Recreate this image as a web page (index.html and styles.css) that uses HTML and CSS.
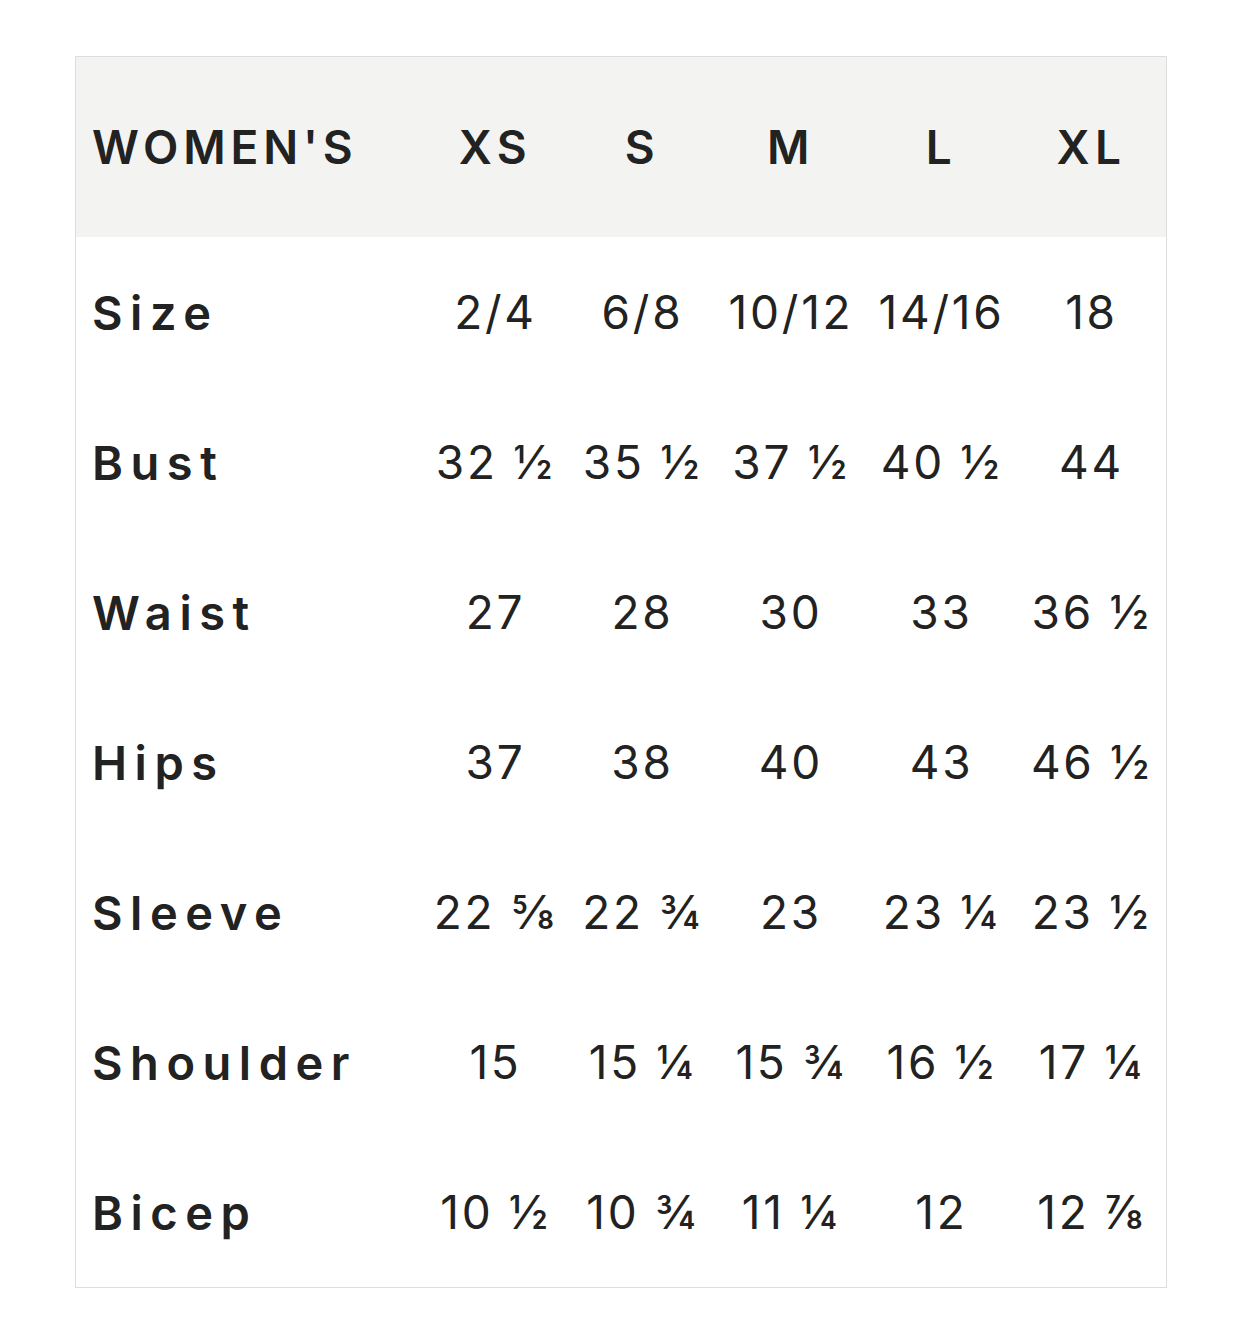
FILE: index.html
```html
<!DOCTYPE html>
<html>
<head>
<meta charset="utf-8">
<link rel="stylesheet" href="styles.css">
</head>
<body>
<div class="chart">
  <div class="row head">
    <div class="label">WOMEN'S</div>
    <div class="cell">XS</div><div class="cell">S</div><div class="cell">M</div><div class="cell">L</div><div class="cell">XL</div>
  </div>
  <div class="row">
    <div class="label">Size</div>
    <div class="cell">2/4</div><div class="cell">6/8</div><div class="cell">10/12</div><div class="cell">14/16</div><div class="cell">18</div>
  </div>
  <div class="row">
    <div class="label">Bust</div>
    <div class="cell">32 ½</div><div class="cell">35 ½</div><div class="cell">37 ½</div><div class="cell">40 ½</div><div class="cell">44</div>
  </div>
  <div class="row">
    <div class="label">Waist</div>
    <div class="cell">27</div><div class="cell">28</div><div class="cell">30</div><div class="cell">33</div><div class="cell">36 ½</div>
  </div>
  <div class="row">
    <div class="label">Hips</div>
    <div class="cell">37</div><div class="cell">38</div><div class="cell">40</div><div class="cell">43</div><div class="cell">46 ½</div>
  </div>
  <div class="row">
    <div class="label">Sleeve</div>
    <div class="cell">22 ⅝</div><div class="cell">22 ¾</div><div class="cell">23</div><div class="cell">23 ¼</div><div class="cell">23 ½</div>
  </div>
  <div class="row">
    <div class="label">Shoulder</div>
    <div class="cell">15</div><div class="cell">15 ¼</div><div class="cell">15 ¾</div><div class="cell">16 ½</div><div class="cell">17 ¼</div>
  </div>
  <div class="row">
    <div class="label">Bicep</div>
    <div class="cell">10 ½</div><div class="cell">10 ¾</div><div class="cell">11 ¼</div><div class="cell">12</div><div class="cell">12 ⅞</div>
  </div>
</div>
</body>
</html>
```
FILE: styles.css
```css
html, body {
  margin: 0;
  background: #ffffff;
}
body {
  padding: 56px 0 0 75px;
  font-family: Inter, "Noto Sans", sans-serif;
  color: #222222;
}
.chart {
  width: 1090px;
  border: 1px solid #dddddd;
}
.row {
  display: grid;
  grid-template-columns: 346px 147px 147px 150px 151px 149px;
  height: 150px;
  align-items: center;
}
.row.head {
  height: 180px;
  background: #f3f4f2;
}
.label {
  padding-left: 16px;
  font-size: 47px;
  font-weight: 600;
  letter-spacing: 0.16em;
}
.head .label {
  font-size: 46px;
  letter-spacing: 0.105em;
}
.cell {
  text-align: center;
  font-size: 46px;
  font-weight: 400;
  letter-spacing: 0.06em;
  white-space: nowrap;
}
.head .cell {
  font-weight: 600;
  letter-spacing: 0.12em;
}
```
